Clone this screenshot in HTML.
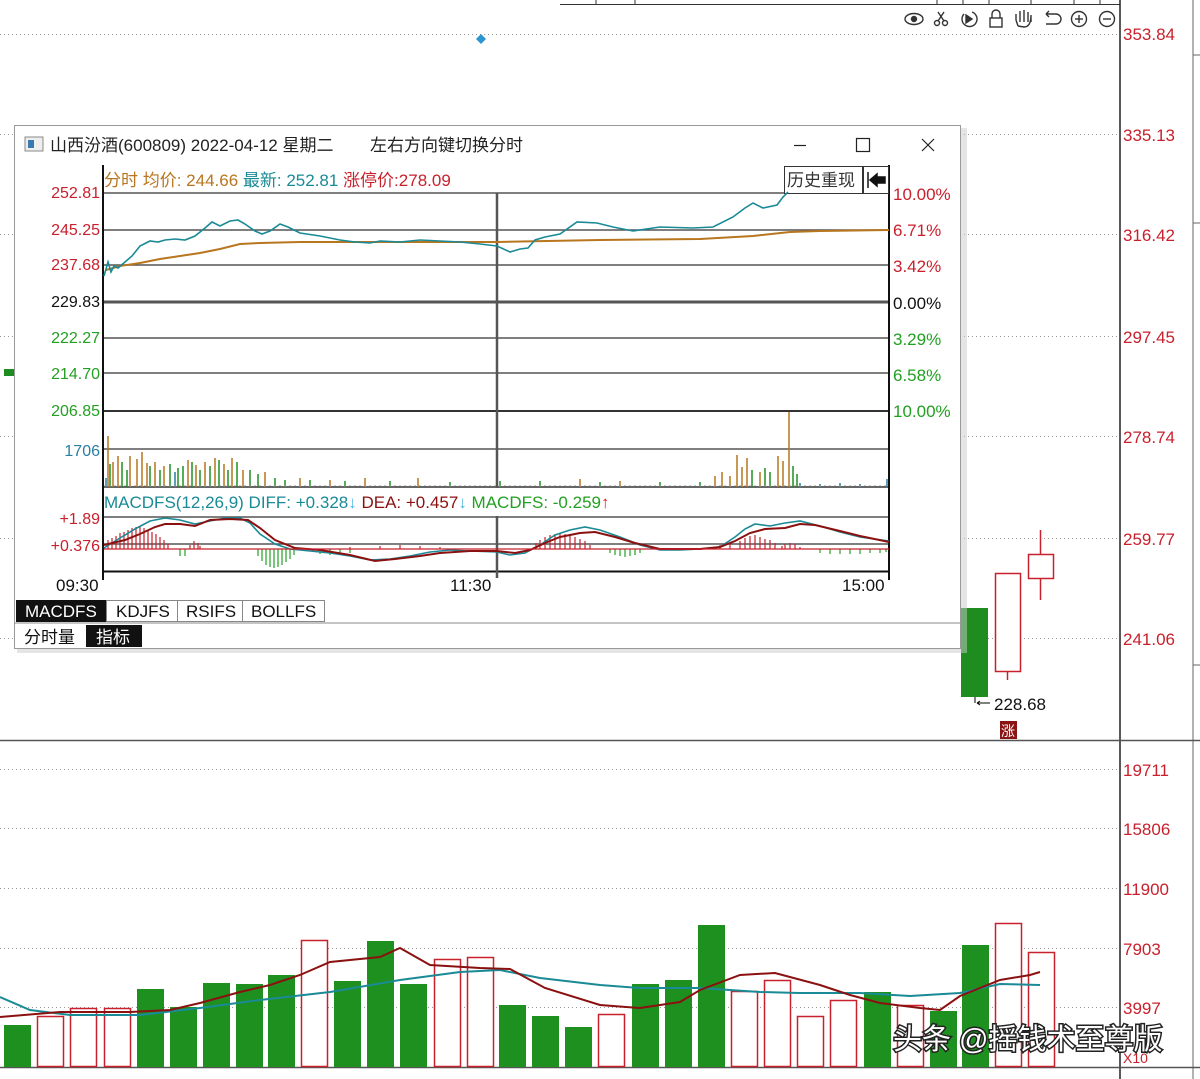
<!DOCTYPE html>
<html><head><meta charset="utf-8">
<style>
html,body{margin:0;padding:0;background:#fff;width:1200px;height:1079px;overflow:hidden;font-family:"Liberation Sans","Noto Sans CJK SC",sans-serif}
svg text{font-family:"Liberation Sans","Noto Sans CJK SC",sans-serif}
</style></head><body>
<svg width="1200" height="1079" xmlns="http://www.w3.org/2000/svg">
<line x1="560" y1="4.5" x2="1120" y2="4.5" stroke="#333"/>
<g stroke="#333"><line x1="596" y1="0" x2="596" y2="4"/><line x1="635" y1="0" x2="635" y2="4"/><line x1="937" y1="0" x2="937" y2="4"/><line x1="963" y1="0" x2="963" y2="4"/><line x1="989" y1="0" x2="989" y2="4"/><line x1="1031" y1="0" x2="1031" y2="4"/><line x1="1074" y1="0" x2="1074" y2="4"/><line x1="1100" y1="0" x2="1100" y2="4"/></g>
<g stroke="#999" stroke-dasharray="1,3">
<line x1="0" y1="34.5" x2="1118" y2="34.5"/><line x1="0" y1="134.5" x2="1118" y2="134.5"/><line x1="0" y1="234.5" x2="1118" y2="234.5"/><line x1="0" y1="336.5" x2="1118" y2="336.5"/><line x1="0" y1="436.5" x2="1118" y2="436.5"/><line x1="0" y1="538.5" x2="1118" y2="538.5"/><line x1="0" y1="638.5" x2="1118" y2="638.5"/>
<line x1="0" y1="769.5" x2="1118" y2="769.5"/><line x1="0" y1="828.5" x2="1118" y2="828.5"/><line x1="0" y1="888.5" x2="1118" y2="888.5"/><line x1="0" y1="948.5" x2="1118" y2="948.5"/><line x1="0" y1="1007.5" x2="1118" y2="1007.5"/>
</g>
<line x1="1120" y1="0" x2="1120" y2="1079" stroke="#222" stroke-width="1.5"/>
<line x1="1193" y1="0" x2="1193" y2="1079" stroke="#666"/>
<line x1="0" y1="740.5" x2="1200" y2="740.5" stroke="#555" stroke-width="1.5"/>
<line x1="0" y1="1067.5" x2="1200" y2="1067.5" stroke="#555" stroke-width="1.5"/>
<g stroke="#666"><line x1="1193" y1="55" x2="1200" y2="55"/><line x1="1193" y1="223" x2="1200" y2="223"/><line x1="1193" y1="665" x2="1200" y2="665"/></g>
<g fill="#c8202c" font-size="17">
<text x="1123" y="40">353.84</text><text x="1123" y="141">335.13</text><text x="1123" y="241">316.42</text><text x="1123" y="343">297.45</text><text x="1123" y="443">278.74</text><text x="1123" y="545">259.77</text><text x="1123" y="645">241.06</text>
<text x="1123" y="776">19711</text><text x="1123" y="835">15806</text><text x="1123" y="895">11900</text><text x="1123" y="955">7903</text><text x="1123" y="1014">3997</text><text x="1123" y="1063" font-size="14">X10</text>
</g>
<g stroke="#333" fill="none" stroke-width="1.4">
<ellipse cx="914" cy="19" rx="9" ry="5.5"/><circle cx="914" cy="19" r="2.5" fill="#333"/>
<circle cx="937" cy="23" r="2.5"/><circle cx="945" cy="23" r="2.5"/><line x1="938" y1="12" x2="944" y2="21"/><line x1="944" y1="12" x2="938" y2="21"/>
<path d="M972 12 A7.5 7.5 0 1 1 964 14"/><path d="M966 15 L972 19 L966 23 Z" fill="#333"/>
<rect x="990" y="18" width="12" height="9"/><path d="M992 18 V14 A4 4 0 0 1 1000 14 V18"/>
<path d="M1018 26 L1016 20 V14 M1020 22 V11 M1024 22 V10 M1028 22 V12 M1031 22 V15 Q1031 27 1024 27 L1018 26"/>
<path d="M1046 14 H1056 A5 5 0 0 1 1056 24 H1046 M1046 14 L1049 11 M1046 14 L1049 17"/>
<circle cx="1079" cy="19" r="7.5"/><line x1="1075" y1="19" x2="1083" y2="19"/><line x1="1079" y1="15" x2="1079" y2="23"/>
<circle cx="1107" cy="19" r="7.5"/><line x1="1103" y1="19" x2="1111" y2="19"/>
</g>
<path d="M481 34 L486 39 L481 44 L476 39 Z" fill="#2b95d0"/>
<rect x="4" y="369" width="11" height="7" fill="#1e8c1e"/>
<rect x="961" y="608" width="27" height="89" fill="#1e8c1e"/>
<line x1="975" y1="697" x2="975" y2="703" stroke="#000"/>
<path d="M977 703 L990 703 M977 703 L980 701 M977 703 L980 705" stroke="#000" fill="none"/>
<text x="994" y="710" font-size="17" fill="#111">228.68</text>
<rect x="1000" y="721" width="17" height="18" fill="#8a1414"/><text x="1001" y="736" font-size="14" fill="#fff">涨</text>
<rect x="995.5" y="573.5" width="25" height="98" fill="#fff" stroke="#c8202c" stroke-width="1.5"/>
<line x1="1007.5" y1="672" x2="1007.5" y2="680" stroke="#c8202c" stroke-width="1.5"/>
<rect x="1028.5" y="554.5" width="25" height="24" fill="#fff" stroke="#c8202c" stroke-width="1.5"/>
<line x1="1040.5" y1="530" x2="1040.5" y2="554" stroke="#c8202c" stroke-width="1.5"/>
<line x1="1040.5" y1="579" x2="1040.5" y2="600" stroke="#c8202c" stroke-width="1.5"/>
<g fill="#1e9020">
<rect x="4" y="1025" width="27" height="42"/><rect x="137" y="989" width="27" height="78"/><rect x="170" y="1007" width="27" height="60"/><rect x="203" y="983" width="27" height="84"/><rect x="236" y="984" width="27" height="83"/><rect x="268" y="975" width="27" height="92"/><rect x="334" y="981" width="27" height="86"/><rect x="367" y="941" width="27" height="126"/><rect x="400" y="984" width="27" height="83"/><rect x="499" y="1005" width="27" height="62"/><rect x="532" y="1016" width="27" height="51"/><rect x="565" y="1027" width="27" height="40"/><rect x="632" y="984" width="27" height="83"/><rect x="665" y="980" width="27" height="87"/><rect x="698" y="925" width="27" height="142"/><rect x="864" y="992" width="27" height="75"/><rect x="930" y="1011" width="27" height="56"/><rect x="962" y="945" width="27" height="122"/>
</g>
<g fill="#fff" stroke="#c8202c" stroke-width="1.5">
<rect x="37.5" y="1016.5" width="26" height="50"/><rect x="70.5" y="1008.5" width="26" height="58"/><rect x="104.5" y="1008.5" width="26" height="58"/><rect x="301.5" y="940.5" width="26" height="126"/><rect x="434.5" y="959.5" width="26" height="107"/><rect x="467.5" y="957.5" width="26" height="109"/><rect x="598.5" y="1014.5" width="26" height="52"/><rect x="731.5" y="991.5" width="26" height="75"/><rect x="764.5" y="980.5" width="26" height="86"/><rect x="797.5" y="1016.5" width="26" height="50"/><rect x="830.5" y="1000.5" width="26" height="66"/><rect x="897.5" y="1005.5" width="26" height="61"/><rect x="995.5" y="923.5" width="26" height="143"/><rect x="1028.5" y="952.5" width="26" height="114"/>
</g>
<polyline fill="none" stroke="#1a8a96" stroke-width="2" points="0,997 30,1010 70,1015 140,1015 200,1008 260,1000 330,992 400,980 460,972 500,970 540,978 600,985 640,988 700,988 760,992 800,993 860,993 910,996 960,993 1000,984 1040,985"/>
<polyline fill="none" stroke="#8b1010" stroke-width="2" points="0,1017 60,1012 130,1012 170,1010 200,1003 240,992 270,985 300,975 330,962 380,957 400,948 430,965 480,968 510,969 545,988 600,1005 640,1008 680,1002 700,990 740,975 775,973 820,985 850,995 880,1003 920,1008 940,1010 960,996 1000,980 1030,975 1040,972"/>
<text x="893" y="1049" font-size="29" fill="#fff" stroke="#222" stroke-width="3" paint-order="stroke">头条 @摇钱术至尊版</text>

<rect x="17" y="128" width="950" height="525" fill="#ccc" opacity="0.5"/>
<rect x="14.5" y="125.5" width="946" height="523" fill="#fff" stroke="#999"/>
<rect x="25" y="137" width="18" height="14" fill="#eee" stroke="#888"/><rect x="28" y="140" width="6" height="8" fill="#3a7ab0"/>
<text x="50" y="151" font-size="17" fill="#222">山西汾酒(600809) 2022-04-12 星期二</text>
<text x="370" y="151" font-size="17" fill="#222">左右方向键切换分时</text>
<line x1="794" y1="145.5" x2="806" y2="145.5" stroke="#222" stroke-width="1.2"/>
<rect x="856.5" y="138.5" width="13" height="13" fill="none" stroke="#222" stroke-width="1.2"/>
<path d="M922 139 L934 151 M934 139 L922 151" stroke="#222" stroke-width="1.2"/>
<g stroke="#555" stroke-width="1.5">
<line x1="103" y1="193" x2="889" y2="193"/><line x1="103" y1="230" x2="889" y2="230"/><line x1="103" y1="265" x2="889" y2="265"/>
<line x1="103" y1="338" x2="889" y2="338"/><line x1="103" y1="373" x2="889" y2="373"/><line x1="103" y1="449" x2="889" y2="449"/>
<line x1="103" y1="517" x2="889" y2="517"/><line x1="103" y1="544" x2="889" y2="544"/>
</g>
<line x1="103" y1="302" x2="889" y2="302" stroke="#555" stroke-width="3"/>
<line x1="103" y1="411" x2="889" y2="411" stroke="#333" stroke-width="2"/>
<line x1="103" y1="487" x2="889" y2="487" stroke="#333" stroke-width="1.5"/>
<line x1="103" y1="571.5" x2="889" y2="571.5" stroke="#111" stroke-width="2"/>
<line x1="103" y1="165" x2="103" y2="580" stroke="#111" stroke-width="2"/>
<line x1="889" y1="165" x2="889" y2="580" stroke="#111" stroke-width="2"/>
<line x1="497" y1="193" x2="497" y2="578" stroke="#555" stroke-width="2.5"/>
<rect x="104" y="488" width="784" height="28" fill="#fff"/>
<text x="104" y="186" font-size="17"><tspan fill="#b8761e">分时 均价: 244.66 </tspan><tspan fill="#1a8a96">最新: 252.81 </tspan><tspan fill="#c8202c">涨停价:278.09</tspan></text>
<rect x="784.5" y="166.5" width="78" height="27" fill="#fff" stroke="#333"/>
<text x="787" y="186" font-size="17" fill="#333">历史重现</text>
<rect x="863.5" y="166.5" width="25" height="27" fill="#fff" stroke="#333"/>
<path d="M868 172 V188 M870 180 L877 174 V177 H885 V183 H877 V186 Z" stroke="#111" fill="#111" stroke-width="1.5"/>
<g font-size="16" text-anchor="end">
<text x="100" y="198" fill="#c8202c">252.81</text><text x="100" y="235" fill="#c8202c">245.25</text><text x="100" y="270" fill="#c8202c">237.68</text>
<text x="100" y="307" fill="#111">229.83</text><text x="100" y="343" fill="#22a022">222.27</text><text x="100" y="379" fill="#22a022">214.70</text><text x="100" y="416" fill="#22a022">206.85</text>
<text x="100" y="456" fill="#2a7fa0">1706</text><text x="100" y="524" fill="#c8202c">+1.89</text><text x="100" y="551" fill="#c8202c">+0.376</text>
</g>
<g font-size="17">
<text x="893" y="200" fill="#c8202c">10.00%</text><text x="893" y="236" fill="#c8202c">6.71%</text><text x="893" y="272" fill="#c8202c">3.42%</text>
<text x="893" y="309" fill="#111">0.00%</text><text x="893" y="345" fill="#22a022">3.29%</text><text x="893" y="381" fill="#22a022">6.58%</text><text x="893" y="417" fill="#22a022">10.00%</text>
</g>
<polyline fill="none" stroke="#b8761e" stroke-width="2" points="106,270 120,266 140,263 160,259 180,256 200,253 220,249 240,244 260,243 300,242 400,242 497,242 600,240 700,239 753,236 790,232 820,231 889,230"/>
<polyline fill="none" stroke="#1a8a96" stroke-width="1.6" points="104,276 108,262 111,272 114,266 118,268 125,262 132,256 140,246 150,241 158,242 165,240 175,239 185,240 195,236 205,228 212,222 220,226 230,221 238,220 245,224 255,231 262,234 270,231 280,224 288,227 300,233 320,236 340,240 355,242 370,243 380,241 400,242 420,240 440,241 460,242 480,244 497,246 510,252 520,249 528,248 535,240 545,237 560,234 577,222 597,223 613,227 633,231 660,227 693,228 713,227 733,217 745,208 753,203 763,208 777,205 783,197 788,192"/>
<path stroke="#b8761e" stroke-width="1.5" fill="none" d="M108 487V436 M113 487V462 M118 487V456 M130 487V456 M137 487V459 M142 487V452 M147 487V463 M155 487V462 M164 487V466 M188 487V460 M196 487V465 M205 487V462 M215 487V458 M224 487V464 M232 487V458 M243 487V470 M265 487V472 M300 487V478 M330 487V480 M365 487V478 M418 487V478 M580 487V479 M620 487V481 M715 487V476 M722 487V472 M730 487V476 M737 487V455 M742 487V467 M747 487V458 M760 487V472 M778 487V456 M783 487V461 M789 487V412"/>
<path stroke="#1e9020" stroke-width="1.5" fill="none" d="M110 487V464 M122 487V462 M127 487V470 M150 487V466 M160 487V470 M170 487V464 M178 487V468 M183 487V466 M192 487V462 M200 487V470 M210 487V466 M219 487V460 M228 487V470 M237 487V462 M250 487V470 M258 487V474 M275 487V478 M285 487V480 M310 487V480 M345 487V481 M390 487V481 M450 487V482 M500 487V481 M540 487V481 M600 487V482 M660 487V482 M700 487V482 M752 487V470 M765 487V468 M770 487V472 M793 487V466 M797 487V474"/>
<path stroke="#2a7fa0" stroke-width="1.5" fill="none" d="M106 487V478 M175 487V472 M800 487V483 M820 487V484 M840 487V483 M860 487V484 M887 487V479"/>
<path stroke="#999" stroke-width="1" fill="none" stroke-dasharray="2,3" d="M104 486H889"/>
<text x="104" y="508" font-size="17"><tspan fill="#1a8a96">MACDFS(12,26,9) DIFF: +0.328</tspan><tspan fill="#4fb8e0">↓</tspan><tspan fill="#8b1010"> DEA: +0.457</tspan><tspan fill="#4fb8e0">↓</tspan><tspan fill="#22a022"> MACDFS: -0.259</tspan><tspan fill="#e0202c">↑</tspan></text>
<path stroke="#c8202c" stroke-width="1.2" fill="none" d="M108 549V540 M112 549V538 M116 549V536 M120 549V533 M124 549V532 M128 549V530 M132 549V528 M136 549V527 M140 549V526 M144 549V528 M148 549V530 M152 549V532 M156 549V534 M160 549V537 M164 549V540 M168 549V544 M190 549V545 M194 549V541 M198 549V543 M200 549V546 M350 549V547 M380 549V546 M400 549V545 M420 549V546 M440 549V547 M536 549V543 M540 549V540 M545 549V537 M550 549V535 M555 549V534 M560 549V533 M565 549V534 M570 549V535 M575 549V537 M580 549V539 M585 549V541 M590 549V545 M720 549V545 M730 549V543 M740 549V541 M745 549V538 M750 549V536 M755 549V535 M760 549V537 M765 549V539 M770 549V540 M775 549V543 M782 549V546 M785 549V544 M790 549V543 M795 549V544 M800 549V547"/>
<path stroke="#22a022" stroke-width="1.2" fill="none" d="M180 549V556 M185 549V556 M258 549V556 M262 549V561 M266 549V565 M270 549V567 M274 549V568 M278 549V567 M282 549V565 M286 549V562 M290 549V559 M294 549V555 M320 549V554 M330 549V555 M340 549V555 M350 549V553 M610 549V553 M615 549V555 M620 549V556 M625 549V557 M630 549V556 M635 549V555 M640 549V553 M820 549V553 M830 549V554 M840 549V554 M850 549V554 M860 549V554 M870 549V553 M880 549V553 M886 549V552"/>
<polyline fill="none" stroke="#1a8a96" stroke-width="1.6" points="104,548 120,538 135,529 150,521 165,518 180,520 195,524 210,521 225,518 240,518 250,523 260,534 275,544 290,549 310,551 330,553 350,556 370,560 390,559 410,556 430,552 450,550 470,551 497,552 510,555 525,553 540,545 555,535 570,530 585,527 600,530 620,537 640,545 660,550 680,550 700,549 720,547 735,537 745,529 755,524 770,526 785,523 800,521 820,526 840,532 860,537 889,541"/>
<polyline fill="none" stroke="#8b1010" stroke-width="2" points="104,545 125,540 140,534 155,527 165,524 180,524 195,526 210,520 230,519 248,520 260,528 275,540 295,548 320,550 350,555 375,561 395,559 420,556 440,553 470,551 497,551 515,553 530,550 545,543 560,537 580,533 595,532 615,537 635,543 660,549 700,549 720,547 735,541 750,533 765,529 785,528 800,524 815,525 840,531 860,536 889,542"/>
<line x1="104" y1="549" x2="889" y2="549" stroke="#c8202c" stroke-width="1.2"/>
<text x="56" y="591" font-size="17" fill="#111">09:30</text>
<text x="450" y="591" font-size="17" fill="#111">11:30</text>
<text x="842" y="591" font-size="17" fill="#111">15:00</text>
<rect x="16" y="600" width="90" height="22" fill="#111"/>
<text x="25" y="617" font-size="17" fill="#fff">MACDFS</text>
<rect x="106.5" y="600.5" width="71" height="21" fill="#fff" stroke="#888"/><text x="116" y="617" font-size="17" fill="#111">KDJFS</text>
<rect x="177.5" y="600.5" width="65" height="21" fill="#fff" stroke="#888"/><text x="186" y="617" font-size="17" fill="#111">RSIFS</text>
<rect x="242.5" y="600.5" width="82" height="21" fill="#fff" stroke="#888"/><text x="251" y="617" font-size="17" fill="#111">BOLLFS</text>
<line x1="15" y1="623" x2="960" y2="623" stroke="#888"/>
<text x="24" y="643" font-size="17" fill="#111">分时量</text>
<rect x="86" y="625" width="56" height="22" fill="#111"/>
<text x="96" y="643" font-size="17" fill="#fff">指标</text>
</svg>
</body></html>
